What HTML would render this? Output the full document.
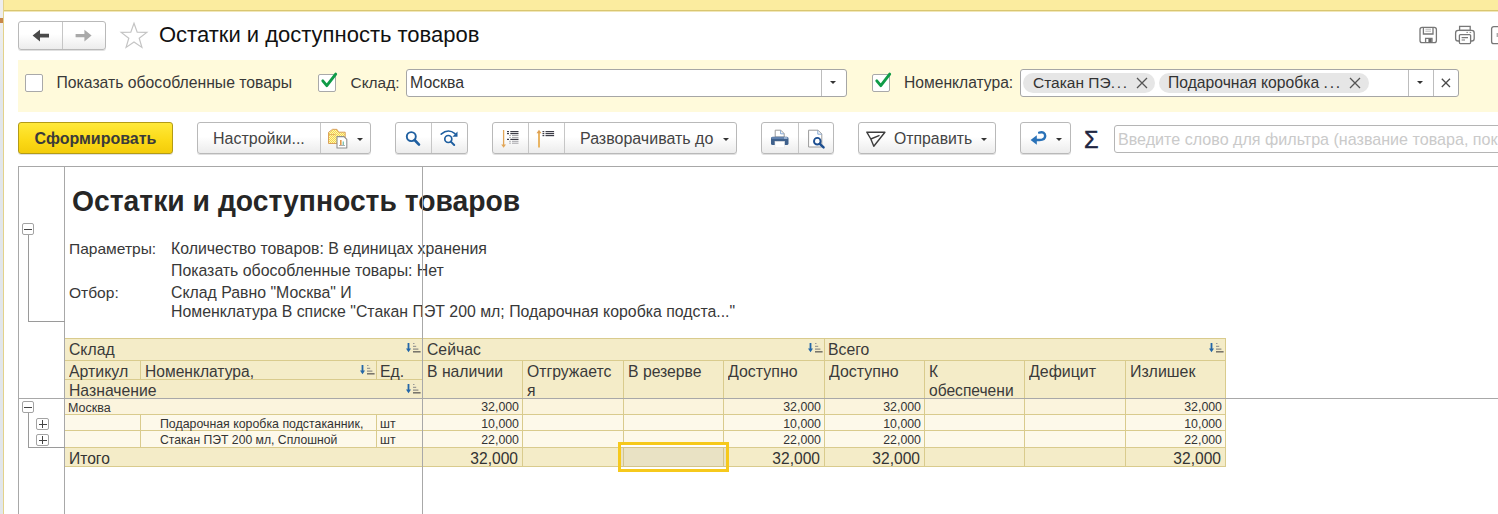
<!DOCTYPE html>
<html lang="ru"><head><meta charset="utf-8"><title>Остатки и доступность товаров</title>
<style>
*{box-sizing:border-box;margin:0;padding:0}
html,body{width:1498px;height:514px;overflow:hidden;background:#fff}
body{position:relative;font-family:"Liberation Sans",Arial,sans-serif;font-size:15px;color:#3b3b3b}
.abs{position:absolute}
.topbar{left:4px;top:0;width:1494px;height:10px;background:#fbec9f;border-bottom:0}
.topline{left:3px;top:10px;width:1495px;height:2px;background:linear-gradient(#d9c670 0,#d9c670 50%,#f1e7b9 50%,#f1e7b9 100%)}
.leftstrip{left:0;top:0;width:3px;height:514px;background:linear-gradient(#eeeeee 0,#eeeeee 30px,#e2e6eb 90px,#e2e6eb 100%)}
.leftline{left:3px;top:0;width:1px;height:514px;background:#e3d28a}
.btn{position:absolute;height:31px;border:1px solid #b9b9b9;border-radius:3px;background:linear-gradient(#ffffff 0%,#ffffff 45%,#ececec 100%);box-shadow:0 1px 0 rgba(0,0,0,.12);white-space:nowrap;font-size:16px;color:#444;line-height:29px}
.btn .div{position:absolute;top:0;width:1px;height:30px;background:#c6c6c6}
.title{left:159px;top:22px;font-size:22px;line-height:26px;transform:scaleY(1.03);transform-origin:0 4px;color:#111;white-space:nowrap}
.band{left:18px;top:60px;width:1480px;height:52px;background:#fffadb}
.cb{position:absolute;width:18px;height:18px;border:1px solid #a9a9a9;border-radius:2px;background:#fff}
.lbl{position:absolute;font-size:15.85px;line-height:18px;white-space:nowrap;color:#383838}
.inp{position:absolute;height:28px;border:1px solid #a6a6a6;border-radius:3px;background:#fff}
.tri{position:absolute;width:0;height:0;border-left:3px solid transparent;border-right:3px solid transparent;border-top:3px solid #333}
.tag{position:absolute;top:3px;height:20px;border-radius:10px;background:#e6e6e6;font-size:15.5px;line-height:20px;color:#333;white-space:nowrap}
.pm{position:absolute;width:12px;height:12px;border:1px solid #a3a3a3;border-radius:2px;background:#fff}
.pm i{position:absolute;background:#444}
.pm .h{left:1px;top:4.5px;width:8px;height:1px}
.pm .v{left:4.5px;top:1px;width:1px;height:8px}
.pm.w{width:13px}.pm.w .h{left:1.5px}.pm.w .v{left:5px}
.el{letter-spacing:1.8px}
.gl{position:absolute;background:#a8a8a8}
.cell{position:absolute;white-space:nowrap;overflow:hidden}
.hd{font-size:15.75px;line-height:19px;color:#3a3a3a}
.sm{font-size:12.35px;line-height:14px;color:#333}
.tot{font-size:15.6px;line-height:18px;color:#333}
.r{text-align:right}
</style></head><body>
<div class="abs topbar"></div><div class="abs topline"></div>
<div class="abs leftstrip"></div><div class="abs leftline"></div>
<div class="abs" style="left:0;top:18px;width:3px;height:5px;background:#c8874a"></div>

<!-- nav buttons -->
<div class="btn" style="left:18px;top:21px;width:88px;height:29px">
  <div class="div" style="left:43px;height:27px"></div>
  <svg class="abs" style="left:0;top:0" width="86" height="27" viewBox="0 0 86 27">
    <path d="M13.6 13.6 L21 7.8 L21 11.7 L30 11.7 L30 15.5 L21 15.5 L21 19.4 Z" fill="#4a4a4a"/>
    <path d="M72.6 13.6 L65.4 7.8 L65.4 11.9 L56.6 11.9 L56.6 15.3 L65.4 15.3 L65.4 19.4 Z" fill="#a9a9a9"/>
  </svg>
</div>
<svg class="abs" style="left:118.5px;top:21px" width="30" height="29" viewBox="0 0 30 29"><path d="M15 2.2 L18.2 11.2 L27.8 11.4 L20.2 17.2 L22.9 26.4 L15 20.9 L7.1 26.4 L9.8 17.2 L2.2 11.4 L11.8 11.2 Z" fill="#fff" stroke="#c4c4c4" stroke-width="1.2" stroke-linejoin="miter"/></svg>
<svg class="abs" style="left:1416px;top:23px" width="82" height="24" viewBox="0 0 82 24">
  <g fill="none" stroke="#777" stroke-width="1.3">
    <rect x="4" y="4.3" width="16.4" height="15.4" rx="2.2"/>
    <path d="M7.4 4.6 V11 H17 V4.6"/>
    <path d="M9.6 19.4 V15.4 H16 V19.4"/>
    <rect x="43.6" y="3.4" width="10.6" height="4"/>
    <rect x="39.6" y="7.4" width="18.6" height="10.6" rx="2.6"/>
    <rect x="43.4" y="11.6" width="11.2" height="9" rx="1" fill="#fff"/>
    <rect x="75.6" y="3.6" width="12" height="17" rx="2.2"/>
  </g>
  <path d="M9.4 6.2 H15 M9.4 8.2 H15" stroke="#b5b5b5" stroke-width="1"/>
  <rect x="12.4" y="16" width="3.2" height="3.2" fill="#666"/>
  <path d="M45.6 14.6 H52 M45.6 17 H49" stroke="#777" stroke-width="1.1"/>
  <path d="M50.4 9.4 H52 M53.6 9.4 H55.2" stroke="#888" stroke-width="1"/>
  <rect x="80.6" y="10" width="2" height="4" fill="#aaa"/>
</svg>
<div class="abs title">Остатки и доступность товаров</div>

<!-- filter band -->
<div class="abs band"></div>
<div class="cb" style="left:25px;top:74px"></div>
<div class="lbl" style="left:56.5px;top:74px;font-size:15.75px">Показать обособленные товары</div>
<div class="cb" style="left:318px;top:74px"></div>
<svg class="abs" style="left:318px;top:70px" width="22" height="22" viewBox="0 0 22 22"><path d="M4.8 10.9 L8.8 15.6 L17.7 4.1" fill="none" stroke="#0f9b47" stroke-width="2.9" stroke-linecap="round" stroke-linejoin="round"/></svg>
<div class="lbl" style="left:350.5px;top:74px;font-size:15.45px">Склад:</div>
<div class="inp" style="left:406px;top:69px;width:441px"><div class="lbl" style="left:3px;top:4px;color:#333">Москва</div><div class="abs" style="left:414px;top:0;width:1px;height:26px;background:#bdbdbd"></div><div class="tri" style="left:423px;top:11px"></div></div>
<div class="cb" style="left:872px;top:74px"></div>
<svg class="abs" style="left:872px;top:70px" width="22" height="22" viewBox="0 0 22 22"><path d="M4.8 10.9 L8.8 15.6 L17.7 4.1" fill="none" stroke="#0f9b47" stroke-width="2.9" stroke-linecap="round" stroke-linejoin="round"/></svg>
<div class="lbl" style="left:904px;top:74px;font-size:15.63px">Номенклатура:</div>
<div class="inp" style="left:1020px;top:69px;width:439px">
  <div class="tag" style="left:2px;width:132px;padding-left:10px">Стакан ПЭ<span class="el">...</span><svg style="position:absolute;left:112.5px;top:4px" width="12" height="12" viewBox="0 0 12 12"><path d="M1 1 L11 11 M11 1 L1 11" stroke="#555" stroke-width="1.3" fill="none"/></svg></div>
  <div class="tag" style="left:138px;width:210px;padding-left:9px;font-size:15.7px">Подарочная коробка <span class="el">...</span><svg style="position:absolute;left:189.5px;top:4px" width="12" height="12" viewBox="0 0 12 12"><path d="M1 1 L11 11 M11 1 L1 11" stroke="#555" stroke-width="1.3" fill="none"/></svg></div>
  <div class="abs" style="left:387px;top:0;width:1px;height:26px;background:#bdbdbd"></div><div class="tri" style="left:396px;top:10.5px"></div>
  <div class="abs" style="left:412px;top:0;width:1px;height:26px;background:#bdbdbd"></div>
  <svg class="abs" style="left:420px;top:7.5px" width="10" height="10" viewBox="0 0 10 10"><path d="M0.8 0.8 L9 9 M9 0.8 L0.8 9" stroke="#4a4a4a" stroke-width="1.3" fill="none"/></svg>
</div>

<!-- toolbar -->
<div class="btn" style="left:18px;top:122px;height:32px;line-height:31px;width:155px;border-color:#b39b16;background:linear-gradient(#ffe93a,#fbd916 60%,#f3cc0a);font-weight:bold;color:#3a3a3a;text-align:center;font-size:16px">Сформировать</div>
<div class="btn" style="left:197px;top:122px;height:32px;line-height:31px;width:174px"><span class="abs" style="left:15px">Настройки...</span><div class="div" style="left:122px"></div><div class="tri" style="left:159px;top:15px"></div></div>
<svg class="abs" style="left:326px;top:127px" width="24" height="24" viewBox="0 0 24 24">
  <defs><pattern id="hp" width="2" height="2" patternUnits="userSpaceOnUse"><rect width="2" height="2" fill="#f6d84a"/><rect width="1" height="1" fill="#fdf3b5"/><rect x="1" y="1" width="1" height="1" fill="#fdf3b5"/></pattern></defs>
  <path d="M2.5 16.5 V5.4 L6.6 2.3 L11 2.4 L12.6 5.2 H19.2 V16.5 Z" fill="url(#hp)" stroke="#d9a15c" stroke-width="1"/>
  <path d="M2.5 7.6 H9.5" stroke="#e3b062" stroke-width="1"/>
  <path d="M11 9.6 H18 L20.8 12.4 V21 H11 Z" fill="#fff" stroke="#8f8f8f" stroke-width="1.1" stroke-linejoin="round"/>
  <rect x="14" y="13" width="1.6" height="5" fill="#e39a4d"/><rect x="16.6" y="14.5" width="1.4" height="3.5" fill="#7fc4b0"/><rect x="13" y="18" width="6" height="0.8" fill="#999"/>
</svg>
<div class="btn" style="left:395px;top:122px;height:32px;line-height:31px;width:73px"><div class="div" style="left:35px"></div></div>
<svg class="abs" style="left:400px;top:126px" width="66" height="26" viewBox="0 0 66 26">
  <circle cx="11.3" cy="10.6" r="4.5" fill="none" stroke="#1f5fa0" stroke-width="1.9"/>
  <path d="M14.6 14 L19 18.6" stroke="#1f5fa0" stroke-width="2.6" stroke-linecap="round"/>
  <circle cx="48.3" cy="13" r="3.5" fill="none" stroke="#1f5fa0" stroke-width="1.7"/>
  <path d="M50.8 15.6 L54.2 19" stroke="#1f5fa0" stroke-width="2" stroke-linecap="round"/>
  <path d="M41.2 8.2 Q48 2.2 55 7.6" fill="none" stroke="#1f5fa0" stroke-width="1.6" stroke-linecap="round"/>
  <path d="M57.5 5.6 V10.8 H52.4 Z" fill="#1f5fa0"/>
</svg>
<div class="btn" style="left:492px;top:122px;height:32px;line-height:31px;width:245px"><div class="div" style="left:35px"></div><div class="div" style="left:71px"></div><span class="abs" style="left:87px">Разворачивать до</span><div class="tri" style="left:230px;top:15px"></div></div>
<svg class="abs" style="left:496px;top:126px" width="64" height="26" viewBox="0 0 64 26">
  <path d="M7.6 4 V20" stroke="#e2a657" stroke-width="1.3"/><path d="M5.2 18.6 H10 L7.6 21.8 Z" fill="#e2a657"/>
  <g fill="#3c3c46"><rect x="11" y="5" width="2" height="1.2"/><rect x="14.3" y="5" width="8.2" height="1.2"/><rect x="11" y="7" width="2" height="1.2"/><rect x="14.3" y="7" width="8.2" height="1.2"/><rect x="11" y="12.8" width="2" height="1.2"/><rect x="14.3" y="12.8" width="8.2" height="1.2"/></g>
  <g fill="#a4a4a8"><rect x="13.2" y="9" width="1.6" height="1"/><rect x="16" y="9" width="6.5" height="1"/><rect x="13.2" y="10.9" width="1.6" height="1"/><rect x="16" y="10.9" width="6.5" height="1"/><rect x="13.2" y="14.8" width="1.6" height="1"/><rect x="16" y="14.8" width="6.5" height="1"/><rect x="13.2" y="16.7" width="1.6" height="1"/><rect x="16" y="16.7" width="6.5" height="1"/></g>
  <path d="M43 7 V21.6" stroke="#e9b565" stroke-width="2"/><path d="M40.5 7.2 H45.5 L43 3.8 Z" fill="#dea052"/>
  <g fill="#3c3c46"><rect x="46.5" y="5" width="1.8" height="1.2"/><rect x="49.5" y="5" width="8.6" height="1.2"/><rect x="46.5" y="7" width="1.8" height="1.2"/><rect x="49.5" y="7" width="8.6" height="1.2"/><rect x="46.5" y="9" width="1.8" height="1.2"/><rect x="49.5" y="9" width="8.6" height="1.2"/></g>
</svg>
<div class="btn" style="left:761px;top:122px;height:32px;line-height:31px;width:73px"><div class="div" style="left:36px"></div></div>
<svg class="abs" style="left:766px;top:126px" width="64" height="26" viewBox="0 0 64 26">
  <path d="M9.2 11 V4.2 H14.8 L18.2 7.6 V11 Z" fill="#fff" stroke="#9a9a9a" stroke-width="1"/><path d="M14.6 4.4 V7.8 H18" fill="none" stroke="#7aa0cf" stroke-width="0.9"/>
  <rect x="5" y="10.8" width="17.5" height="8.2" rx="1.6" fill="#3f618c"/><rect x="5.6" y="11.2" width="16.3" height="1.6" fill="#6b8cb8"/><rect x="18" y="11.5" width="3.2" height="1" fill="#cfe0f2"/>
  <rect x="9" y="15.4" width="9.6" height="6.4" fill="#fff" stroke="#e5e5e5" stroke-width="0.6"/>
  <path d="M42.6 4.2 H52 L55.8 8 V21 H42.6 Z" fill="#fff" stroke="#9a9a9a" stroke-width="1"/><path d="M51.8 4.4 V8.2 H55.6" fill="none" stroke="#7aa0cf" stroke-width="0.9"/>
  <circle cx="51.3" cy="15.2" r="3.3" fill="#fff" stroke="#1d4f91" stroke-width="1.9"/><path d="M53.8 17.8 L57.6 21.4" stroke="#1d4f91" stroke-width="2.4" stroke-linecap="round"/>
</svg>
<div class="btn" style="left:858px;top:122px;height:32px;line-height:31px;width:138px"><span class="abs" style="left:35px;font-size:15.8px">Отправить</span><div class="tri" style="left:122px;top:15px"></div></div>
<svg class="abs" style="left:862px;top:126px" width="28" height="26" viewBox="0 0 28 26"><path d="M4.8 6.2 L22.9 6.3 L11.8 20.2 L8.8 13 Z M8.8 13 L17 9.6" fill="none" stroke="#3d3d3d" stroke-width="1.4" stroke-linejoin="round" stroke-linecap="round"/></svg>
<div class="btn" style="left:1020px;top:122px;height:32px;line-height:31px;width:51px"><div class="tri" style="left:35px;top:15px"></div></div>
<svg class="abs" style="left:1026px;top:126px" width="24" height="26" viewBox="0 0 24 26"><path d="M13.2 6.6 Q19 5.2 19.2 10 Q19 14.2 13 14 H9" fill="none" stroke="#2a72b8" stroke-width="2.5" stroke-linecap="round"/><path d="M4.6 13.9 L10.8 9.2 V18.8 Z" fill="#2a72b8"/></svg>
<div class="abs" style="left:1084px;top:126px;font-size:23.5px;line-height:28px;color:#1e2642;-webkit-text-stroke:0.5px #1e2642;transform:scaleX(1);transform-origin:0 0">Σ</div>
<div class="inp" style="left:1114px;top:125px;width:400px;height:28px;border-color:#b5b5b5"><div class="lbl" style="left:3px;top:4px;font-size:16.1px;color:#cacaca">Введите слово для фильтра (название товара, покупателя)</div></div>

<!-- report -->

<div class="abs" style="left:72px;top:184px;font-size:28.3px;line-height:34px;font-weight:bold;color:#262626;white-space:nowrap;transform:scaleY(1.065);transform-origin:0 27px">Остатки и доступность товаров</div>
<div class="lbl" style="left:69px;top:240px;font-size:15.55px">Параметры:</div>
<div class="lbl" style="left:171px;top:240px">Количество товаров: В единицах хранения</div>
<div class="lbl" style="left:171px;top:262px">Показать обособленные товары: Нет</div>
<div class="lbl" style="left:69px;top:284px;font-size:15.55px">Отбор:</div>
<div class="lbl" style="left:171px;top:284px">Склад Равно "Москва" И</div>
<div class="lbl" style="left:171px;top:303px">Номенклатура В списке "Стакан ПЭТ 200 мл; Подарочная коробка подста..."</div>

<!--TABLE-->
<div class="abs" style="left:65px;top:338px;width:1161px;height:60px;background:#f4ecc8"></div>
<div class="abs" style="left:65px;top:398px;width:1161px;height:16px;background:#fbf4dd"></div>
<div class="abs" style="left:65px;top:414px;width:1161px;height:33px;background:#fdf9ea"></div>
<div class="abs" style="left:65px;top:447px;width:1161px;height:20px;background:#f4ecc8"></div>
<div class="abs" style="left:65px;top:338px;width:1161px;height:1px;background:#d9cb8d"></div>
<div class="abs" style="left:65px;top:360px;width:1161px;height:1px;background:#d9cb8d"></div>
<div class="abs" style="left:65px;top:379px;width:357px;height:1px;background:#d9cb8d"></div>
<div class="abs" style="left:65px;top:414px;width:1161px;height:1px;background:#d9cb8d"></div>
<div class="abs" style="left:65px;top:430px;width:1161px;height:1px;background:#d9cb8d"></div>
<div class="abs" style="left:65px;top:447px;width:1161px;height:1px;background:#d9cb8d"></div>
<div class="abs" style="left:65px;top:466px;width:1161px;height:1px;background:#d9cb8d"></div>
<div class="abs" style="left:1225px;top:338px;width:1px;height:129px;background:#d9cb8d"></div>
<div class="abs" style="left:824px;top:338px;width:1px;height:129px;background:#d9cb8d"></div>
<div class="abs" style="left:522px;top:360px;width:1px;height:107px;background:#d9cb8d"></div>
<div class="abs" style="left:623px;top:360px;width:1px;height:107px;background:#d9cb8d"></div>
<div class="abs" style="left:723px;top:360px;width:1px;height:107px;background:#d9cb8d"></div>
<div class="abs" style="left:924px;top:360px;width:1px;height:107px;background:#d9cb8d"></div>
<div class="abs" style="left:1024px;top:360px;width:1px;height:107px;background:#d9cb8d"></div>
<div class="abs" style="left:1125px;top:360px;width:1px;height:107px;background:#d9cb8d"></div>
<div class="abs" style="left:140px;top:360px;width:1px;height:19px;background:#d9cb8d"></div>
<div class="abs" style="left:376px;top:360px;width:1px;height:19px;background:#d9cb8d"></div>
<div class="abs" style="left:140px;top:414px;width:1px;height:33px;background:#d9cb8d"></div>
<div class="abs" style="left:376px;top:414px;width:1px;height:33px;background:#d9cb8d"></div>
<div class="cell hd" style="left:69px;top:340px;width:300px;">Склад</div>
<div class="cell hd" style="left:69px;top:362px;width:70px;font-size:15.9px">Артикул</div>
<div class="cell hd" style="left:145px;top:362px;width:200px;font-size:15.6px">Номенклатура,</div>
<div class="cell hd" style="left:380px;top:362px;width:42px;">Ед.</div>
<div class="cell hd" style="left:69px;top:381px;width:300px;">Назначение</div>
<div class="cell hd" style="left:427px;top:340px;width:300px;">Сейчас</div>
<div class="cell hd" style="left:828px;top:340px;width:300px;">Всего</div>
<div class="cell hd" style="left:427px;top:362px;width:96px;">В наличии</div>
<div class="cell hd" style="left:527px;top:362px;width:96px;">Отгружаетс<br>я</div>
<div class="cell hd" style="left:628px;top:362px;width:96px;">В резерве</div>
<div class="cell hd" style="left:728px;top:362px;width:96px;font-size:15.95px">Доступно</div>
<div class="cell hd" style="left:829px;top:362px;width:96px;font-size:15.95px">Доступно</div>
<div class="cell hd" style="left:929px;top:362px;width:96px;font-size:15.6px">К<br>обеспечени</div>
<div class="cell hd" style="left:1029px;top:362px;width:96px;font-size:15.95px">Дефицит</div>
<div class="cell hd" style="left:1130px;top:362px;width:96px;font-size:15.95px">Излишек</div>
<svg class="abs" style="left:406px;top:343px" width="15" height="10" viewBox="0 0 15 10"><path d="M1.6 0 h1.8 v5.6 h1.6 L2.5 9.2 L0 5.6 h1.6 Z" fill="#2467a8"/><rect x="7" y="0" width="1.5" height="1" fill="#999"/><rect x="7" y="2.8" width="3.2" height="1" fill="#888"/><rect x="7" y="5.6" width="5.4" height="1" fill="#777"/><rect x="7" y="8.3" width="7.6" height="1.1" fill="#444"/></svg>
<svg class="abs" style="left:808px;top:343px" width="15" height="10" viewBox="0 0 15 10"><path d="M1.6 0 h1.8 v5.6 h1.6 L2.5 9.2 L0 5.6 h1.6 Z" fill="#2467a8"/><rect x="7" y="0" width="1.5" height="1" fill="#999"/><rect x="7" y="2.8" width="3.2" height="1" fill="#888"/><rect x="7" y="5.6" width="5.4" height="1" fill="#777"/><rect x="7" y="8.3" width="7.6" height="1.1" fill="#444"/></svg>
<svg class="abs" style="left:1209px;top:343px" width="15" height="10" viewBox="0 0 15 10"><path d="M1.6 0 h1.8 v5.6 h1.6 L2.5 9.2 L0 5.6 h1.6 Z" fill="#2467a8"/><rect x="7" y="0" width="1.5" height="1" fill="#999"/><rect x="7" y="2.8" width="3.2" height="1" fill="#888"/><rect x="7" y="5.6" width="5.4" height="1" fill="#777"/><rect x="7" y="8.3" width="7.6" height="1.1" fill="#444"/></svg>
<svg class="abs" style="left:360px;top:365px" width="15" height="10" viewBox="0 0 15 10"><path d="M1.6 0 h1.8 v5.6 h1.6 L2.5 9.2 L0 5.6 h1.6 Z" fill="#2467a8"/><rect x="7" y="0" width="1.5" height="1" fill="#999"/><rect x="7" y="2.8" width="3.2" height="1" fill="#888"/><rect x="7" y="5.6" width="5.4" height="1" fill="#777"/><rect x="7" y="8.3" width="7.6" height="1.1" fill="#444"/></svg>
<svg class="abs" style="left:406px;top:384px" width="15" height="10" viewBox="0 0 15 10"><path d="M1.6 0 h1.8 v5.6 h1.6 L2.5 9.2 L0 5.6 h1.6 Z" fill="#2467a8"/><rect x="7" y="0" width="1.5" height="1" fill="#999"/><rect x="7" y="2.8" width="3.2" height="1" fill="#888"/><rect x="7" y="5.6" width="5.4" height="1" fill="#777"/><rect x="7" y="8.3" width="7.6" height="1.1" fill="#444"/></svg>
<div class="cell sm" style="left:68px;top:401px;width:300px;font-size:12.5px">Москва</div>
<div class="cell sm" style="left:160px;top:417px;width:214px;">Подарочная коробка подстаканник,</div>
<div class="cell sm" style="left:160px;top:433px;width:214px;font-size:12.2px">Стакан ПЭТ 200 мл, Сплошной</div>
<div class="cell sm" style="left:380px;top:417px;width:40px;">шт</div>
<div class="cell sm" style="left:380px;top:433px;width:40px;">шт</div>
<div class="cell sm r" style="left:422px;top:400px;width:97px;">32,000</div>
<div class="cell sm r" style="left:422px;top:417px;width:97px;">10,000</div>
<div class="cell sm r" style="left:422px;top:433px;width:97px;">22,000</div>
<div class="cell tot r" style="left:422px;top:450px;width:96px;">32,000</div>
<div class="cell sm r" style="left:723px;top:400px;width:98px;">32,000</div>
<div class="cell sm r" style="left:723px;top:417px;width:98px;">10,000</div>
<div class="cell sm r" style="left:723px;top:433px;width:98px;">22,000</div>
<div class="cell tot r" style="left:723px;top:450px;width:97px;">32,000</div>
<div class="cell sm r" style="left:824px;top:400px;width:97px;">32,000</div>
<div class="cell sm r" style="left:824px;top:417px;width:97px;">10,000</div>
<div class="cell sm r" style="left:824px;top:433px;width:97px;">22,000</div>
<div class="cell tot r" style="left:824px;top:450px;width:96px;">32,000</div>
<div class="cell sm r" style="left:1125px;top:400px;width:97px;">32,000</div>
<div class="cell sm r" style="left:1125px;top:417px;width:97px;">10,000</div>
<div class="cell sm r" style="left:1125px;top:433px;width:97px;">22,000</div>
<div class="cell tot r" style="left:1125px;top:450px;width:96px;">32,000</div>
<div class="cell tot" style="left:69px;top:450px;width:100px;">Итого</div>
<div class="abs" style="left:621px;top:445px;width:105px;height:24px;background:#fff"></div>
<div class="abs" style="left:621px;top:447px;width:105px;height:20px;background:#e9e2c4"></div>
<div class="abs" style="left:623px;top:447px;width:1px;height:20px;background:#d3c48c"></div><div class="abs" style="left:723px;top:447px;width:1px;height:20px;background:#d3c48c"></div><div class="abs" style="left:621px;top:447px;width:105px;height:1px;background:#d3c48c"></div><div class="abs" style="left:621px;top:466px;width:105px;height:1px;background:#d3c48c"></div>
<div class="abs" style="left:618px;top:442px;width:111px;height:30px;border:3px solid #f6c91c"></div>
<!--/TABLE-->
<div class="gl" style="left:18px;top:166px;width:1480px;height:1px"></div>
<div class="gl" style="left:18px;top:166px;width:1px;height:348px"></div>
<div class="gl" style="left:64px;top:166px;width:1px;height:348px"></div>
<div class="gl" style="left:422px;top:166px;width:1px;height:348px"></div>
<div class="gl" style="left:18px;top:398px;width:1480px;height:1px"></div>
<!-- tree -->
<div class="abs" style="left:28px;top:234px;width:1px;height:88px;background:#9a9a9a"></div>
<div class="abs" style="left:28px;top:321px;width:37px;height:1px;background:#9a9a9a"></div>
<div class="pm" style="left:22px;top:223px"><i class="h"></i></div>
<div class="abs" style="left:28px;top:413px;width:1px;height:34px;background:#9a9a9a"></div>
<div class="abs" style="left:28px;top:447px;width:37px;height:1px;background:#9a9a9a"></div>
<div class="pm" style="left:22px;top:401px"><i class="h"></i></div>
<div class="pm w" style="left:36px;top:418px"><i class="h"></i><i class="v"></i></div>
<div class="pm w" style="left:36px;top:434px"><i class="h"></i><i class="v"></i></div>
</body></html>
